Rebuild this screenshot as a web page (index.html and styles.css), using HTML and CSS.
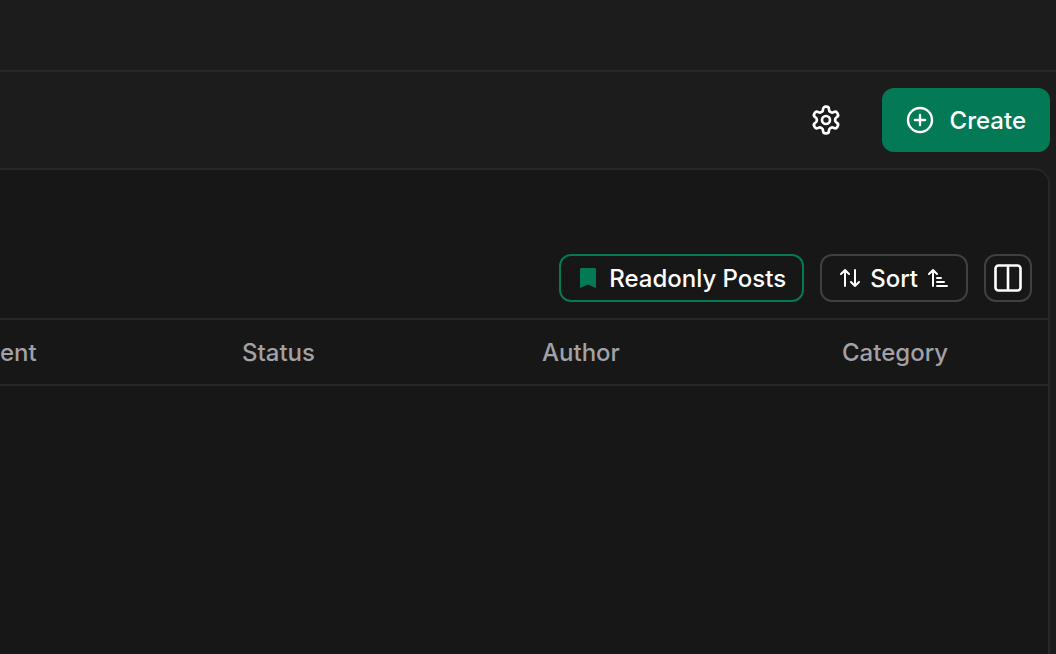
FILE: index.html
```html
<!DOCTYPE html>
<html lang="en">
<head>
    <meta charset="UTF-8">
    <meta name="viewport" content="width=device-width, initial-scale=1.0">
    <title>Posts</title>
    <link rel="stylesheet" href="styles.css">
</head>
<body>
    <header class="top-bar"></header>

    <div class="page-actions">
        <button class="icon-btn" type="button" aria-label="Settings">
            <svg width="32" height="32" viewBox="0 0 24 24" fill="none" stroke="currentColor" stroke-width="2" stroke-linecap="round" stroke-linejoin="round">
                <path d="M12.22 2h-.44a2 2 0 0 0-2 2v.18a2 2 0 0 1-1 1.73l-.43.25a2 2 0 0 1-2 0l-.15-.08a2 2 0 0 0-2.73.73l-.22.38a2 2 0 0 0 .73 2.73l.15.1a2 2 0 0 1 1 1.72v.51a2 2 0 0 1-1 1.74l-.15.09a2 2 0 0 0-.73 2.73l.22.38a2 2 0 0 0 2.73.73l.15-.08a2 2 0 0 1 2 0l.43.25a2 2 0 0 1 1 1.73V20a2 2 0 0 0 2 2h.44a2 2 0 0 0 2-2v-.18a2 2 0 0 1 1-1.73l.43-.25a2 2 0 0 1 2 0l.15.08a2 2 0 0 0 2.73-.73l.22-.39a2 2 0 0 0-.73-2.73l-.15-.08a2 2 0 0 1-1-1.74v-.5a2 2 0 0 1 1-1.74l.15-.09a2 2 0 0 0 .73-2.73l-.22-.38a2 2 0 0 0-2.73-.73l-.15.08a2 2 0 0 1-2 0l-.43-.25a2 2 0 0 1-1-1.73V4a2 2 0 0 0-2-2z"/>
                <circle cx="12" cy="12" r="3"/>
            </svg>
        </button>
        <button class="create-btn" type="button">
            <svg width="28" height="28" viewBox="0 0 28 28" fill="none" stroke="currentColor" stroke-width="2.4" stroke-linecap="round">
                <circle cx="14" cy="14" r="12"/>
                <path d="M14 9v10M9 14h10"/>
            </svg>
            <span>Create</span>
        </button>
    </div>

    <main class="panel">
        <div class="filters">
            <button class="filter-btn active" type="button">
                <svg width="18" height="20" viewBox="0 0 18 20" fill="currentColor">
                    <path d="M2.500 0h13a1.500 1.500 0 0 1 1.500 1.500V20l-8-3.500L1 20V1.500A1.500 1.500 0 0 1 2.500 0z"/>
                </svg>
                <span>Readonly Posts</span>
            </button>
            <button class="filter-btn" type="button">
                <svg width="20" height="20" viewBox="0 0 20 20" fill="none" stroke="currentColor" stroke-width="2" stroke-linecap="round" stroke-linejoin="round">
                    <path d="M5 18V2M1 6l4-4 4 4M15 2v16M11 14l4 4 4-4"/>
                </svg>
                <span>Sort</span>
                <svg width="20" height="20" viewBox="0 0 20 20" fill="none" stroke="currentColor" stroke-width="2" stroke-linecap="round" stroke-linejoin="round">
                    <path d="M5 18V2M1 6l4-4 4 4M9 10h4M9 14h7M9 18h10"/>
                </svg>
            </button>
            <button class="filter-btn square" type="button" aria-label="Columns">
                <svg width="28" height="28" viewBox="0 0 28 28" fill="none" stroke="currentColor" stroke-width="2.600" stroke-linejoin="round">
                    <rect x="1.500" y="1.500" width="25" height="25" rx="3"/>
                    <path d="M14 1.500v25"/>
                </svg>
            </button>
        </div>

        <table class="posts">
            <thead>
                <tr>
                    <th class="first" scope="col">ent</th>
                    <th class="middle" scope="col">Status</th>
                    <th class="middle" scope="col">Author</th>
                    <th scope="col">Category</th>
                </tr>
            </thead>
        </table>
    </main>
</body>
</html>
```
FILE: styles.css
```css
* {
    box-sizing: border-box;
}
body {
    margin: 0;
    min-height: 100vh;
    display: flex;
    flex-direction: column;
    font-family: Inter, "Liberation Sans", sans-serif;
    font-size: 24px;
    line-height: 32px;
    background: #1c1c1c;
    color: #fff;
}
button {
    display: flex;
    align-items: center;
    justify-content: center;
    font: inherit;
    font-weight: 500;
    color: inherit;
    background: none;
    border: none;
    cursor: pointer;
}
button span {
    padding-top: 2px;
}
svg {
    display: block;
    flex: none;
}
.top-bar {
    height: 72px;
    border-bottom: 2px solid #272727;
}
.page-actions {
    display: flex;
    justify-content: flex-end;
    gap: 24px;
    padding: 16px 6px 16px 0;
}
.icon-btn {
    width: 64px;
    padding: 0;
}
.create-btn {
    height: 64px;
    gap: 16px;
    padding: 0 24px;
    border-radius: 12px;
    background: #037a55;
}

/* content panel */
.panel {
    flex: 1;
    margin-right: 6px;
    background: #171717;
    border: 2px solid #272727;
    border-width: 2px 2px 0 0;
    border-top-right-radius: 16px;
}
.filters {
    display: flex;
    justify-content: flex-end;
    gap: 16px;
    padding: 84px 16px 16px;
}
.filter-btn {
    height: 48px;
    gap: 10px;
    padding: 0 18px;
    border: 2px solid #404040;
    border-radius: 12px;
}
.filter-btn.active {
    gap: 12px;
    padding: 0 16px 0 18px;
    border-color: #037a55;
}
.filter-btn.active svg {
    color: #037a55;
}
.filter-btn.square {
    width: 48px;
    padding: 0;
}

.posts {
    width: 100%;
    table-layout: fixed;
    border-collapse: separate;
    border-spacing: 0;
}
.posts th {
    height: 68px;
    padding: 2px 16px 0;
    border: 2px solid #272727;
    border-width: 2px 0;
    color: #a1a1a6;
    font-weight: 500;
    text-align: left;
}
.posts .first {
    width: 226px;
    padding-left: 0;
}
.posts .middle {
    width: 300px;
}
```
